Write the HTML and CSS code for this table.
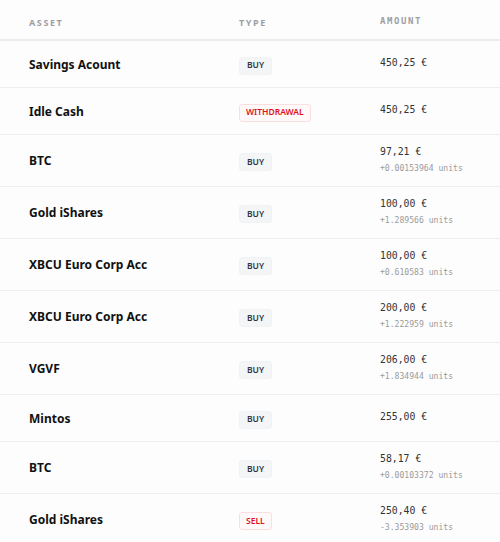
FILE: index.html
```html
<!DOCTYPE html>
<html>
<head>
<meta charset="utf-8">
<link rel="stylesheet" href="styles.css">
</head>
<body>
<div class="table">
  <div class="row head">
    <div class="cell c1">Asset</div>
    <div class="cell c2">Type</div>
    <div class="cell c3">Amount</div>
  </div>
  <div class="row">
    <div class="cell c1 name">Savings Acount</div>
    <div class="cell c2"><span class="badge buy">BUY</span></div>
    <div class="cell c3"><div class="amt">450,25 €</div></div>
  </div>
  <div class="row">
    <div class="cell c1 name">Idle Cash</div>
    <div class="cell c2"><span class="badge red">WITHDRAWAL</span></div>
    <div class="cell c3"><div class="amt">450,25 €</div></div>
  </div>
  <div class="row two">
    <div class="cell c1 name">BTC</div>
    <div class="cell c2"><span class="badge buy">BUY</span></div>
    <div class="cell c3"><div class="amt">97,21 €</div><div class="units">+0.00153964 units</div></div>
  </div>
  <div class="row two">
    <div class="cell c1 name">Gold iShares</div>
    <div class="cell c2"><span class="badge buy">BUY</span></div>
    <div class="cell c3"><div class="amt">100,00 €</div><div class="units">+1.289566 units</div></div>
  </div>
  <div class="row two">
    <div class="cell c1 name">XBCU Euro Corp Acc</div>
    <div class="cell c2"><span class="badge buy">BUY</span></div>
    <div class="cell c3"><div class="amt">100,00 €</div><div class="units">+0.610583 units</div></div>
  </div>
  <div class="row two">
    <div class="cell c1 name">XBCU Euro Corp Acc</div>
    <div class="cell c2"><span class="badge buy">BUY</span></div>
    <div class="cell c3"><div class="amt">200,00 €</div><div class="units">+1.222959 units</div></div>
  </div>
  <div class="row two">
    <div class="cell c1 name">VGVF</div>
    <div class="cell c2"><span class="badge buy">BUY</span></div>
    <div class="cell c3"><div class="amt">206,00 €</div><div class="units">+1.834944 units</div></div>
  </div>
  <div class="row">
    <div class="cell c1 name">Mintos</div>
    <div class="cell c2"><span class="badge buy">BUY</span></div>
    <div class="cell c3"><div class="amt">255,00 €</div></div>
  </div>
  <div class="row two">
    <div class="cell c1 name">BTC</div>
    <div class="cell c2"><span class="badge buy">BUY</span></div>
    <div class="cell c3"><div class="amt">58,17 €</div><div class="units">+0.00103372 units</div></div>
  </div>
  <div class="row two">
    <div class="cell c1 name">Gold iShares</div>
    <div class="cell c2"><span class="badge red">SELL</span></div>
    <div class="cell c3"><div class="amt">250,40 €</div><div class="units">-3.353903 units</div></div>
  </div>
</div>
</body>
</html>
```

FILE: styles.css
```css
html, body {
  margin: 0;
  padding: 0;
  background: #fdfdfd;
}
body {
  font-family: "Noto Sans", "Open Sans", sans-serif;
  color: #111;
}
.table {
  width: 500px;
}
.row {
  display: grid;
  grid-template-columns: 239px 141px 1fr;
  align-items: center;
  height: 46px;
  border-bottom: 1px solid #efefef;
}
.row.two {
  height: 51px;
}
.row.head {
  height: 39px;
  border-bottom: 2px solid #ececec;
  background: #fdfdfd;
}
.head .cell {
  font-size: 9px;
  font-weight: 700;
  letter-spacing: 1.6px;
  text-transform: uppercase;
  color: #9d9da3;
  padding-top: 5px;
}
.c1 {
  padding-left: 29px;
}
.name {
  font-size: 12px;
  font-weight: 700;
  color: #111;
}
.c2 {
  display: flex;
  align-items: center;
  padding-top: 3px;
}
.badge {
  display: inline-flex;
  align-items: center;
  justify-content: center;
  height: 16px;
  padding: 0 7px;
  border-radius: 3px;
  font-size: 8.5px;
  font-weight: 600;
  line-height: 1;
}
.badge.buy {
  background: #f4f5f7;
  color: #2f3642;
  border: 1px solid #f1f2f4;
}
.badge.red {
  background: #fff9f9;
  color: #e0101c;
  border: 1px solid #fbdfe0;
  padding: 0 6px;
}
.c3 {
  font-family: "DejaVu Sans Mono", monospace;
  padding-bottom: 2px;
}
.amt {
  font-size: 9.8px;
  color: #333;
  line-height: 14px;
}
.units {
  font-size: 8.1px;
  color: #9b9b9b;
  line-height: 12px;
  margin-top: 3px;
}
```
